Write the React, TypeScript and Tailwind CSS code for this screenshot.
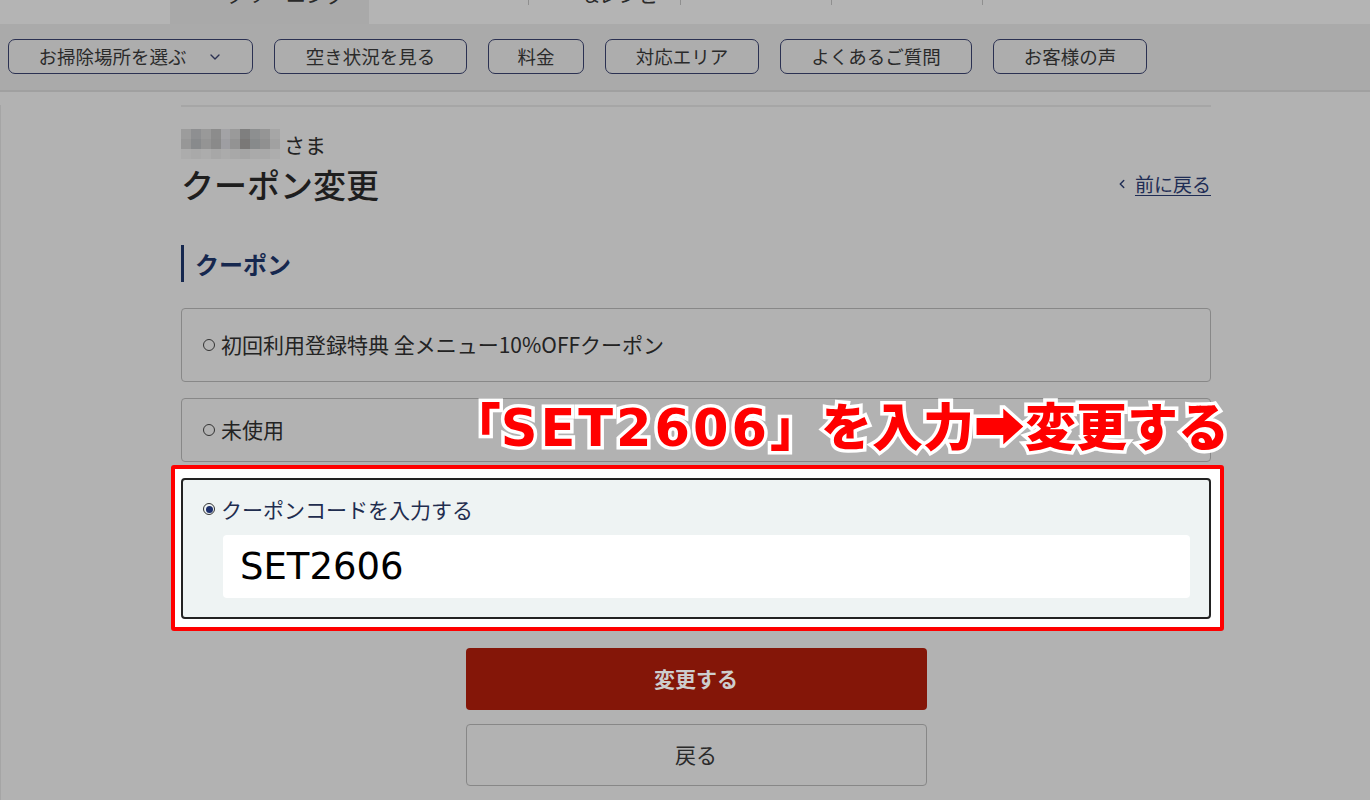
import { ChevronDown, ChevronLeft } from 'lucide-react';

const navItems = [
  { label: 'お掃除場所を選ぶ', w: 'w-[245px]', caret: true },
  { label: '空き状況を見る', w: 'w-[193px]' },
  { label: '料金', w: 'w-[96px]' },
  { label: '対応エリア', w: 'w-[154px]' },
  { label: 'よくあるご質問', w: 'w-[192px]' },
  { label: 'お客様の声', w: 'w-[154px]' },
];

// blurred name blocks
const blurCells = [
  '#9c9c9c', '#8e8f91', '#999999', '#8c8c8c', '#a3a3a6', '#9a9a9a', '#7f7f7f', '#8d8f90', '#959595', '#a6a6a6',
  '#979797', '#888a8c', '#949494', '#8a8a8a', '#9e9ea2', '#939393', '#7a7877', '#878a8b', '#909090', '#a1a1a1',
  '#acacac', '#a9a9a9', '#acacac', '#a7a7a7', '#ababab', '#a8a8a8', '#a5a5a5', '#aaaaaa', '#a9a9a9', '#adadad',
];

function Radio({ checked }: { checked?: boolean }) {
  return (
    <span className="mr-[6px] inline-flex h-[12px] w-[12px] shrink-0 items-center justify-center rounded-full border border-[#333] bg-transparent">
      {checked && <span className="h-[7px] w-[7px] rounded-full bg-[#1d2f6b]" />}
    </span>
  );
}

export default function App() {
  return (
    <div className="min-h-[800px] w-[1370px] overflow-hidden bg-[#b2b2b2] text-[#232323] [font-family:'Noto_Sans_CJK_JP','Noto_Sans',sans-serif]">
      {/* tab strip (cut off at top) */}
      <div className="relative flex h-[24px] bg-[#b4b4b4]">
        <div className="ml-[170px] h-full w-[199px] overflow-hidden bg-[#a9a9a9]">
          <div className="-mt-[17px] pl-[56px] text-[20px] leading-[24px] text-[#2a2a2a]">クリーニング</div>
        </div>
        <div className="ml-[159px] h-[5px] w-px bg-[#8f8f8f]" />
        <div className="h-full w-[151px] overflow-hidden">
          <div className="-mt-[17px] pl-[56px] text-[20px] leading-[24px] text-[#2a2a2a]">&amp;レシピ</div>
        </div>
        <div className="h-[5px] w-px bg-[#8f8f8f]" />
        <div className="w-[150px]" />
        <div className="h-[5px] w-px bg-[#8f8f8f]" />
        <div className="w-[150px]" />
        <div className="h-[5px] w-px bg-[#8f8f8f]" />
      </div>

      {/* nav bar */}
      <div className="flex h-[68px] items-start gap-[21px] border-b-2 border-[#a0a0a0] bg-[#aaaaaa] pt-[15px] pl-[8px]">
        {navItems.map((item) => (
          <div
            key={item.label}
            className={`${item.w} flex h-[35px] items-center justify-center rounded-[7px] border-[1.5px] border-[#2b3152] bg-[#adadad] text-[18.5px] text-[#2a2a2a]`}
          >
            <span>{item.label}</span>
            {item.caret && <ChevronDown className="ml-[20px] h-[16px] w-[16px] text-[#2b3152]" strokeWidth={2} />}
          </div>
        ))}
      </div>

      <div className="border-l border-[#a5a5a5] pb-[20px]">
        <div className="ml-[180px] w-[1030px]">
          <div className="mt-[13px] h-[2px] bg-[#a6a6a6]" />

          {/* name */}
          <div className="mt-[22px] flex items-center">
            <div className="grid h-[30px] w-[99px] grid-cols-10 grid-rows-[10px_10px_10px]">
              {blurCells.map((c, i) => (
                <span key={i} style={{ backgroundColor: c }} />
              ))}
            </div>
            <span className="ml-[4px] text-[21px] leading-[30px]">さま</span>
          </div>

          {/* title row */}
          <div className="mt-[5px] flex items-center justify-between">
            <h1 className="text-[33px] font-medium leading-[40px] text-[#1e1e1e]">クーポン変更</h1>
            <a className="flex items-center text-[19px] text-[#1f2d55]">
              <ChevronLeft className="mr-[6px] h-[14px] w-[14px]" strokeWidth={2.5} />
              <span className="underline underline-offset-[3px]">前に戻る</span>
            </a>
          </div>

          {/* section heading */}
          <div className="mt-[41px] flex h-[37px] items-center border-l-[3px] border-[#16284f] pl-[11px]">
            <h2 className="text-[24px] font-bold text-[#16284f]">クーポン</h2>
          </div>

          {/* options */}
          <div className="relative mt-[26px]">
            <div className="flex h-[74px] items-center rounded-[4px] border-[1.5px] border-[#888888] pl-[21px] text-[21px]">
              <Radio />
              初回利用登録特典 全メニュー10%OFFクーポン
            </div>
            <div className="mt-[16px] flex h-[64px] items-center rounded-[4px] border-[1.5px] border-[#888888] pl-[21px] text-[21px]">
              <Radio />
              未使用
            </div>

            {/* highlighted selected option */}
            <div className="-mr-[13px] -ml-[10px] mt-[3px] rounded-[3px] border-4 border-[#ff0000] bg-white pt-[9px] pr-[9px] pb-[8px] pl-[6px]">
              <div className="h-[141px] rounded-[4px] border-2 border-[#222] bg-[#eef3f3] pt-[14px] pl-[20px] pr-[19px]">
                <div className="flex items-center text-[21px] leading-[30px] text-[#1f2d4f]">
                  <Radio checked />
                  クーポンコードを入力する
                </div>
                <div className="mt-[11px] ml-[20px] flex h-[63px] items-center rounded-[4px] bg-white pl-[17px] text-[37px] text-black [font-family:'DejaVu_Sans',sans-serif]">
                  SET2606
                </div>
              </div>
            </div>

            {/* annotation */}
            <div className="pointer-events-none absolute top-[81px] right-[-18px] text-[51px] leading-[70px] font-black whitespace-nowrap text-[#ff0000] [paint-order:stroke_fill] [-webkit-text-stroke:7px_#ffffff]">
              「<span className="text-[51px] font-bold tracking-[3px] [font-family:'DejaVu_Sans',sans-serif]">SET2606</span>」を入力➡変更する
            </div>
          </div>

          {/* buttons */}
          <div className="mt-[17px] flex flex-col items-center">
            <button className="flex h-[62px] w-[461px] items-center justify-center rounded-[4px] bg-[#841608] text-[21px] font-bold text-[#cdcdcd]">
              変更する
            </button>
            <button className="mt-[14px] flex h-[62px] w-[461px] items-center justify-center rounded-[4px] border-[1.5px] border-[#878787] text-[21px] text-[#2a2a2a]">
              戻る
            </button>
          </div>
        </div>
      </div>
    </div>
  );
}
